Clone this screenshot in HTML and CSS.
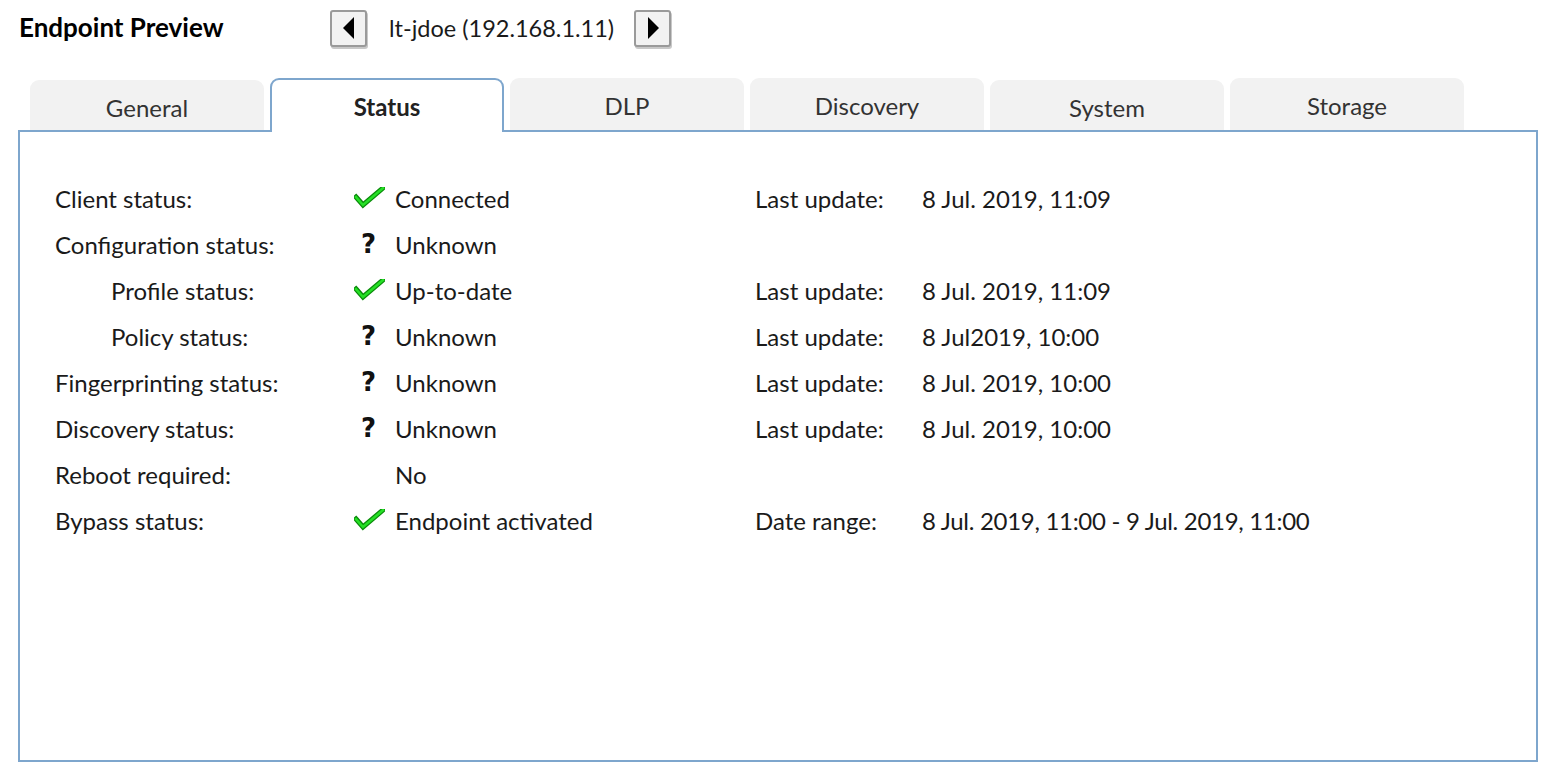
FILE: index.html
```html
<!DOCTYPE html>
<html>
<head>
<meta charset="utf-8">
<link rel="stylesheet" href="styles.css">
</head>
<body>
<div class="header">
  <h1 class="title">Endpoint Preview</h1>
  <div class="nav">
    <button class="navbtn" aria-label="Previous"><svg width="12" height="22" viewBox="0 0 12 22"><polygon points="11,0 11,22 0,11" fill="#000"/></svg></button>
    <span class="host">lt-jdoe (192.168.1.11)</span>
    <button class="navbtn" aria-label="Next"><svg width="12" height="22" viewBox="0 0 12 22"><polygon points="1,0 1,22 12,11" fill="#000"/></svg></button>
  </div>
</div>
<div class="tabs">
  <div class="tab low">General</div>
  <div class="tab active">Status</div>
  <div class="tab">DLP</div>
  <div class="tab">Discovery</div>
  <div class="tab low">System</div>
  <div class="tab">Storage</div>
</div>
<div class="panel">
  <div class="grid">
    <div class="lbl">Client status:</div>
    <div class="ic"><svg class="check" width="31" height="22" viewBox="0 0 31 22"><polyline points="2,10 9,18 29,1" fill="none" stroke="#0a8a0a" stroke-width="5" stroke-linecap="square"/><polyline points="2,10 9,18 29,1" fill="none" stroke="#26e026" stroke-width="2.5" stroke-linecap="square"/></svg></div>
    <div class="val">Connected</div>
    <div class="lbl2">Last update:</div>
    <div class="val2">8 Jul. 2019, 11:09</div>

    <div class="lbl">Configuration status:</div>
    <div class="ic"><span class="q">?</span></div>
    <div class="val">Unknown</div>
    <div class="lbl2"></div>
    <div class="val2"></div>

    <div class="lbl sub">Profile status:</div>
    <div class="ic"><svg class="check" width="31" height="22" viewBox="0 0 31 22"><polyline points="2,10 9,18 29,1" fill="none" stroke="#0a8a0a" stroke-width="5" stroke-linecap="square"/><polyline points="2,10 9,18 29,1" fill="none" stroke="#26e026" stroke-width="2.5" stroke-linecap="square"/></svg></div>
    <div class="val">Up-to-date</div>
    <div class="lbl2">Last update:</div>
    <div class="val2">8 Jul. 2019, 11:09</div>

    <div class="lbl sub">Policy status:</div>
    <div class="ic"><span class="q">?</span></div>
    <div class="val">Unknown</div>
    <div class="lbl2">Last update:</div>
    <div class="val2">8 Jul2019, 10:00</div>

    <div class="lbl">Fingerprinting status:</div>
    <div class="ic"><span class="q">?</span></div>
    <div class="val">Unknown</div>
    <div class="lbl2">Last update:</div>
    <div class="val2">8 Jul. 2019, 10:00</div>

    <div class="lbl">Discovery status:</div>
    <div class="ic"><span class="q">?</span></div>
    <div class="val">Unknown</div>
    <div class="lbl2">Last update:</div>
    <div class="val2">8 Jul. 2019, 10:00</div>

    <div class="lbl">Reboot required:</div>
    <div class="ic"></div>
    <div class="val">No</div>
    <div class="lbl2"></div>
    <div class="val2"></div>

    <div class="lbl">Bypass status:</div>
    <div class="ic"><svg class="check" width="31" height="22" viewBox="0 0 31 22"><polyline points="2,10 9,18 29,1" fill="none" stroke="#0a8a0a" stroke-width="5" stroke-linecap="square"/><polyline points="2,10 9,18 29,1" fill="none" stroke="#26e026" stroke-width="2.5" stroke-linecap="square"/></svg></div>
    <div class="val">Endpoint activated</div>
    <div class="lbl2">Date range:</div>
    <div class="val2 dates">8 Jul. 2019, 11:00 - 9 Jul. 2019, 11:00</div>
  </div>
</div>
</body>
</html>
```

FILE: styles.css
```css
html, body {
  margin: 0;
  padding: 0;
  background: #ffffff;
}
body {
  font-family: "Source Sans Pro", Lato, "Noto Sans", sans-serif;
  color: #1a1a1a;
  padding: 7px 0 0 18px;
  width: 1520px;
}
.header {
  display: flex;
  align-items: center;
  height: 42px;
}
.title {
  margin: 0 0 0 1px;
  width: 311px;
  font-size: 26px;
  font-weight: 700;
  color: #000;
  line-height: 1;
  margin-top: -2px;
}
.nav {
  display: flex;
  align-items: center;
}
.navbtn {
  width: 37px;
  height: 37px;
  padding: 0;
  margin: 0;
  display: flex;
  align-items: center;
  justify-content: center;
  background: #f2f2f2;
  border: 2px solid #9a9a9a;
  border-radius: 3px;
  box-shadow: 1px 2px 0 #c8c8c8;
}
.host {
  font-size: 23.5px;
  margin: 0 20px 0 22px;
  color: #1a1a1a;
}
.tabs {
  display: flex;
  gap: 6px;
  margin-top: 29px;
  padding-left: 12px;
  align-items: flex-end;
  height: 52px;
}
.tab {
  width: 234px;
  height: 52px;
  box-sizing: border-box;
  background: #f2f2f2;
  border-radius: 9px 9px 0 0;
  display: flex;
  justify-content: center;
  padding-top: 13px;
  font-size: 24px;
  color: #333;
}
.tab.low {
  height: 50px;
  padding-top: 13px;
}
.tab.active {
  background: #fff;
  border: 2px solid #7ea6cd;
  border-bottom: none;
  height: 54px;
  margin-bottom: -2px;
  padding-top: 12px;
  font-weight: 700;
  color: #222;
  position: relative;
  z-index: 1;
}
.panel {
  box-sizing: border-box;
  width: 1520px;
  height: 632px;
  border: 2px solid #7ea6cd;
  padding: 43px 0 0 35px;
}
.grid {
  display: grid;
  grid-template-columns: 300px 40px 360px 167px 1fr;
  grid-auto-rows: 46px;
  font-size: 24px;
  color: #1a1a1a;
}
.grid > div {
  display: flex;
  align-items: center;
}
.lbl.sub {
  padding-left: 56px;
}
.dates {
  letter-spacing: -0.3px;
}
.check {
  display: block;
  margin-left: -1px;
  margin-top: -1px;
}
.q {
  font-family: "DejaVu Sans", sans-serif;
  font-weight: 700;
  font-size: 26px;
  color: #111;
  margin-left: 6px;
}
```
